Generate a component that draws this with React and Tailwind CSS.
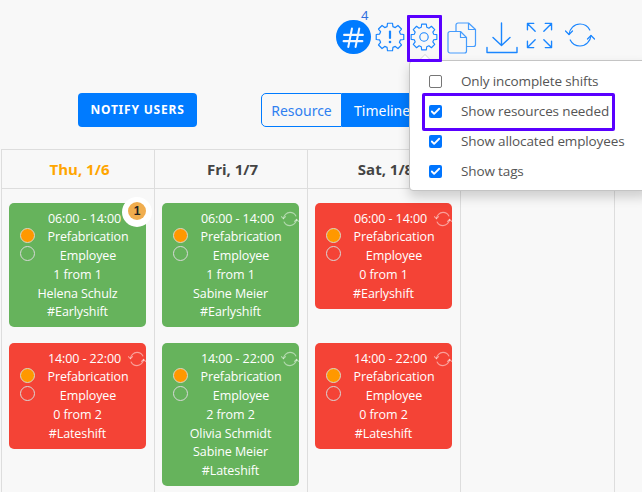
import { Check } from 'lucide-react';

const BLUE = '#1a86ff';

// outline of a cog with rounded-ish teeth
function gearPath(cx, cy, outer, inner, teeth) {
  const step = (Math.PI * 2) / teeth;
  const pts = [];
  for (let i = 0; i < teeth; i++) {
    const a = i * step - Math.PI / 2;
    const spread = [
      [-0.5, inner],
      [-0.27, outer],
      [0.27, outer],
      [0.5, inner],
    ];
    spread.forEach(([k, r]) => {
      const t = a + k * step * (r === outer ? 0.85 : 0.7);
      pts.push([cx + Math.cos(t) * r, cy + Math.sin(t) * r]);
    });
  }
  return 'M' + pts.map((p) => p[0].toFixed(2) + ' ' + p[1].toFixed(2)).join('L') + 'Z';
}

function Gear({ className, children }) {
  return (
    <svg viewBox="0 0 30 30" fill="none" stroke={BLUE} strokeWidth="1.200" strokeLinejoin="round" className={className}>
      <path d={gearPath(15, 15, 14, 10.8, 8)} />
      {children}
    </svg>
  );
}

function SyncIcon({ className, color = BLUE, width = 1.2 }) {
  return (
    <svg viewBox="0 0 30 24" fill="none" stroke={color} strokeWidth={width} strokeLinecap="round" strokeLinejoin="round" className={className}>
      <path d="M4 11.500C4.500 5.800 9.200 1 15 1c4.300 0 8 2.400 9.800 6" />
      <path d="M26 12.500C25.500 18.200 20.800 23 15 23c-4.300 0-8-2.400-9.800-6" />
      <path d="M0.500 8L4 11.500 7.500 8" />
      <path d="M22.500 16L26 12.500 29.500 16" />
    </svg>
  );
}

function Toolbar() {
  return (
    <div className="flex h-[93px] items-start pl-[336px] pt-[8px]">
      <div className="relative mt-[12px] flex h-[34px] w-[35px] items-center justify-center rounded-full bg-[#007bff] text-white">
        <svg viewBox="0 0 24 24" fill="none" stroke="white" strokeWidth="2" strokeLinecap="round" className="h-[25px] w-[25px] opacity-95">
          <path d="M3 9.500h18M2.500 15.500h18M10.500 3.500L7 21M17.500 3.500L14 21" />
        </svg>
        <span className="absolute left-[25px] top-[-13px] text-[13px] leading-[16px] text-[#2f6fe0]">4</span>
      </div>
      <Gear className="ml-[4px] mt-[14px] h-[30px] w-[30px]">
        <path d="M15 9.500v6.500" strokeWidth="2.200" strokeLinecap="round" />
        <circle cx="15" cy="20" r="1.300" fill={BLUE} stroke="none" />
      </Gear>
      <Gear className="ml-[5px] mt-[15px] h-[28px] w-[28px]">
        <circle cx="15" cy="15" r="4.500" />
      </Gear>
      <svg viewBox="0 0 30 32" fill="none" stroke={BLUE} strokeWidth="1.200" strokeLinejoin="round" className="ml-[9px] mt-[14px] h-[32px] w-[30px] opacity-80">
        <path d="M1 11.500a2 2 0 0 1 2-2h10.500l6 6v13.500a2 2 0 0 1-2 2H3a2 2 0 0 1-2-2z" />
        <path d="M13.500 9.500v6h6" />
        <path d="M9 9.500V3a2 2 0 0 1 2-2h10.500l7 6.500v15a2 2 0 0 1-2 2h-7" />
        <path d="M21.500 1v6.500h7" />
      </svg>
      <svg viewBox="0 0 32 32" fill="none" stroke={BLUE} strokeWidth="1.400" strokeLinecap="round" strokeLinejoin="round" className="ml-[9px] mt-[14px] h-[32px] w-[32px]">
        <path d="M15.500 1v22M7 15.500l8.500 8 8.500-8" />
        <path d="M1 25.500v5h30v-5" />
      </svg>
      <svg viewBox="0 0 28 28" fill="none" stroke={BLUE} strokeWidth="1.400" strokeLinecap="round" strokeLinejoin="round" className="ml-[8px] mt-[14px] h-[27px] w-[27px]">
        <path d="M1.500 8V1.500H8M1.500 1.500l8 8M20 1.500h6.500V8M26.500 1.500l-8 8M1.500 20v6.500H8M1.500 26.500l8-8M26.500 20v6.500H20M26.500 26.500l-8-8" />
      </svg>
      <SyncIcon className="ml-[12px] mt-[15px] h-[24px] w-[30px]" />
    </div>
  );
}

function Actions() {
  return (
    <div className="flex h-[56px] items-start">
      <button className="ml-[78px] h-[34px] w-[119px] rounded-[4px] bg-[#007bff] text-[12px] font-bold tracking-[0.8px] text-white">
        NOTIFY USERS
      </button>
      <div className="ml-[64px] flex h-[34px] text-[14px]">
        <span className="flex w-[81px] items-center justify-center rounded-l-[5px] border border-[#007bff] text-[#2f7ff0]">Resource</span>
        <span className="flex w-[90px] items-center bg-[#007bff] pl-[12px] text-white">Timeline</span>
      </div>
    </div>
  );
}

function Shift({ color, height, time, role, count, people, tag, badge }) {
  return (
    <div className={`relative ${color} rounded-[5px] pt-[6.700px] font-['Open_Sans',sans-serif] text-[12.500px] leading-[18.75px] tracking-[-0.1px] text-white`} style={{ height }}>
      <div className="pl-[14px] text-center">{time}</div>
      <div className="flex items-center pl-[11px] pr-[5px]">
        <span className="-mt-[5px] h-[15px] w-[15px] shrink-0 rounded-full border border-[#d8d8c8] bg-[#ff9800]" />
        <span className="flex-1 text-center">Prefabrication</span>
      </div>
      <div className="flex items-center pl-[11px] pr-[5px]">
        <span className="-mt-[7px] h-[15px] w-[15px] shrink-0 rounded-full border border-[#d8d8d8]" />
        <span className="flex-1 text-center">{role}</span>
      </div>
      <div className="text-center">{count}</div>
      {people.map((p) => (
        <div key={p} className="text-center">{p}</div>
      ))}
      <div className="text-center">{tag}</div>
      {badge ? (
        <span className="absolute right-[-6px] top-[-6px] flex h-[30px] w-[30px] items-center justify-center rounded-full bg-white">
          <span className="-mt-[2px] flex h-[18px] w-[18px] items-center justify-center rounded-full bg-[#f0ad4e] font-['Liberation_Sans',sans-serif] text-[12px] font-bold text-[#222]">1</span>
        </span>
      ) : (
        <SyncIcon className="absolute right-[0px] top-[8px] h-[16px] w-[18px]" color="rgba(255,255,255,0.5)" width="1.800" />
      )}
    </div>
  );
}

const GREEN = 'bg-[#66b35c]';
const RED = 'bg-[#f44336]';

const columns = [
  {
    title: 'Thu, 1/6',
    titleClass: 'text-[#ffa500]',
    shifts: [
      { color: GREEN, height: 124, time: '06:00 - 14:00', count: '1 from 1', people: ['Helena Schulz'], tag: '#Earlyshift', badge: true },
      { color: RED, height: 106, time: '14:00 - 22:00', count: '0 from 2', people: [], tag: '#Lateshift' },
    ],
  },
  {
    title: 'Fri, 1/7',
    titleClass: 'text-[#444]',
    shifts: [
      { color: GREEN, height: 124, time: '06:00 - 14:00', count: '1 from 1', people: ['Sabine Meier'], tag: '#Earlyshift' },
      { color: GREEN, height: 143, time: '14:00 - 22:00', count: '2 from 2', people: ['Olivia Schmidt', 'Sabine Meier'], tag: '#Lateshift' },
    ],
  },
  {
    title: 'Sat, 1/8',
    titleClass: 'text-[#444]',
    shifts: [
      { color: RED, height: 106, time: '06:00 - 14:00', count: '0 from 1', people: [], tag: '#Earlyshift' },
      { color: RED, height: 106, time: '14:00 - 22:00', count: '0 from 2', people: [], tag: '#Lateshift' },
    ],
  },
];

function Calendar() {
  return (
    <div className="grid h-[343px] grid-cols-[153px_153px_153px_154px_1fr] pl-[1px]">
      {columns.map((col) => (
        <div key={col.title} className="border-l-[1px] border-[#dddddd]">
          <div className={`flex h-[40px] items-center justify-center border-y border-[#dddddd] pl-[3px] font-['Open_Sans',sans-serif] text-[15px] font-bold ${col.titleClass}`}>
            {col.title}
          </div>
          <div className="flex h-[303px] flex-col pl-[7px] pr-[8px] pt-[14px]">
            {col.shifts.map((s, i) => (
              <div key={i} className={i === 0 && col.title !== 'Sat, 1/8' ? 'mb-[16px]' : 'mb-[34px]'}>
                <Shift role="Employee" {...s} />
              </div>
            ))}
          </div>
        </div>
      ))}
      {[0, 1].map((i) => (
        <div key={i} className="border-l-[1px] border-[#dddddd]">
          <div className="h-[40px] border-y border-[#dddddd]" />
        </div>
      ))}
    </div>
  );
}

const options = [
  { label: 'Only incomplete shifts', checked: false },
  { label: 'Show resources needed', checked: true },
  { label: 'Show allocated employees', checked: true },
  { label: 'Show tags', checked: true },
];

function SettingsMenu() {
  return (
    <div className="absolute left-[409px] top-[60px] h-[131px] w-[240px] rounded-[4px] border border-[#c4c4c4] bg-white py-[5px] font-['Open_Sans',sans-serif] shadow-[0_6px_12px_rgba(0,0,0,0.175)]">
      {options.map((o) => (
        <div key={o.label} className="flex h-[30px] items-center pl-[19px] text-[13.500px] tracking-[-0.13px] text-[#555]">
          <span className={`flex h-[13px] w-[13px] items-center justify-center rounded-[2px] ${o.checked ? 'bg-[#0075ff]' : 'border border-[#767676] bg-white'}`}>
            {o.checked && <Check className="h-[11px] w-[11px] text-white" strokeWidth={4} />}
          </span>
          <span className="ml-[19px]">{o.label}</span>
        </div>
      ))}
    </div>
  );
}

export default function App() {
  return (
    <div className="relative h-[492px] w-[642px] overflow-hidden bg-[#f8f8f8] font-['Noto_Sans','Open_Sans',sans-serif]">
      <Toolbar />
      <Actions />
      <Calendar />
      <SettingsMenu />
      {/* caret above the menu */}
      <span className="absolute left-[418px] top-[54px] h-0 w-0 border-x-[7px] border-b-[7px] border-x-transparent border-b-[#d4d4d4]" />
      <span className="absolute left-[419px] top-[55px] h-0 w-0 border-x-[6px] border-b-[6px] border-x-transparent border-b-[#ffffff]" />
      {/* highlight boxes */}
      <span className="absolute left-[407px] top-[15px] h-[47px] w-[35px] rounded-[1px] border-[3px] border-[#5a00ff]" />
      <span className="absolute left-[422px] top-[93px] h-[38px] w-[193px] rounded-[2px] border-[3px] border-[#5a00ff]" />
    </div>
  );
}
